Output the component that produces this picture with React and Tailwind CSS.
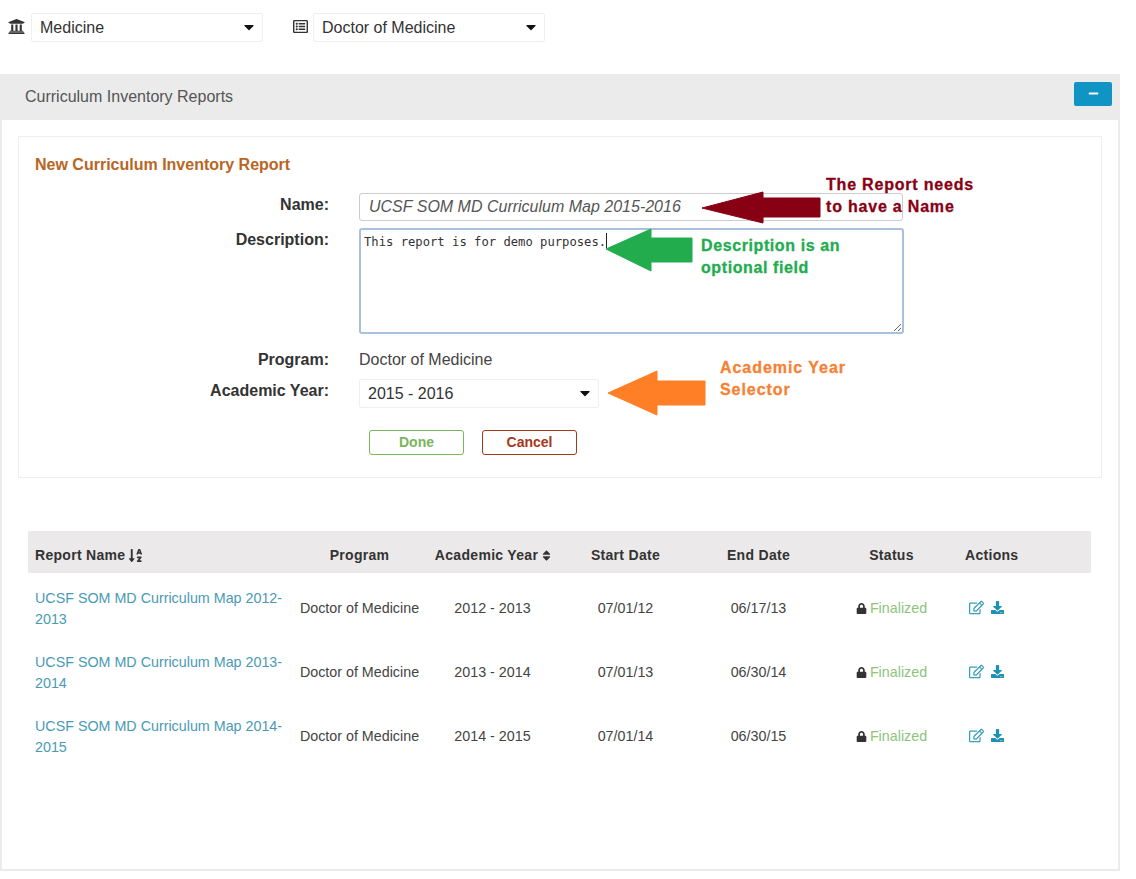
import React from "react";
import { FaUniversity, FaRegListAlt, FaSortAlphaDown, FaSort, FaLock, FaRegEdit, FaDownload, FaMinus, FaCaretDown } from "react-icons/fa";

const font = "font-['Liberation_Sans',Arial,sans-serif]";

function Select({ value, className }) {
  return (
    <div className={`relative h-[29px] border border-[#efefef] rounded-[2px] bg-white ${className}`}>
      <select defaultValue={value} className="w-full h-full appearance-none bg-transparent pl-2 pr-6 text-[16px] text-[#333] outline-none">
        <option>{value}</option>
      </select>
      <FaCaretDown className="absolute right-[5px] top-[5px] w-[16px] h-[16px] text-[#111] pointer-events-none" />
    </div>
  );
}

const rows = [
  ["UCSF SOM MD Curriculum Map 2012-2013", "2012 - 2013", "07/01/12", "06/17/13"],
  ["UCSF SOM MD Curriculum Map 2013-2014", "2013 - 2014", "07/01/13", "06/30/14"],
  ["UCSF SOM MD Curriculum Map 2014-2015", "2014 - 2015", "07/01/14", "06/30/15"],
];

function Note({ className, children }) {
  return <div className={`absolute text-[16px] leading-[22px] font-bold [-webkit-text-stroke:0.3px] whitespace-nowrap ${className}`}>{children}</div>;
}

function Arrow({ className, w, h, points, fill }) {
  return (
    <svg className={`absolute ${className}`} width={w} height={h} viewBox={`0 0 ${w} ${h}`}>
      <polygon points={points} fill={fill} stroke={fill} strokeWidth="1" strokeLinejoin="round" />
    </svg>
  );
}

export default function App() {
  return (
    <div className={`relative w-[1136px] h-[879px] bg-white text-[#444] ${font}`}>
      <div className="h-[74px] pt-[13px] flex items-start">
        <FaUniversity className="ml-[8px] mt-[5px] w-[17px] h-[17px] text-[#333]" />
        <Select value="Medicine" className="ml-[6px] w-[232px]" />
        <FaRegListAlt className="ml-[30px] mt-[6px] w-[15px] h-[15px] text-[#333]" />
        <Select value="Doctor of Medicine" className="ml-[5px] w-[232px]" />
      </div>

      <div className="w-[1120px] h-[797px] border-x-2 border-b-2 border-[#ebebeb]">
        <div className="-mx-[2px] h-[46px] bg-[#ebebeb] pl-[25px] pr-[8px] flex items-center justify-between">
          <span className="text-[16px] text-[#555] -mt-[1px]">Curriculum Inventory Reports</span>
          <button className="w-[38px] h-[24px] -mt-[7px] rounded-[2px] bg-[#0f94c4] flex items-center justify-center">
            <FaMinus className="w-[11px] h-[11px] text-white" />
          </button>
        </div>

        <div className="ml-[16px] mt-[16px] w-[1084px] h-[342px] border border-[#eeeeee] pt-[18px] pl-[16px]">
          <h2 className="text-[16px] leading-[20px] font-bold text-[#b8661f]">New Curriculum Inventory Report</h2>

          <div className="mt-[18px] flex">
            <label className="w-[294px] text-right text-[16px] leading-[22px] font-bold text-[#333] mt-[1px]">Name:</label>
            <input readOnly defaultValue="UCSF SOM MD Curriculum Map 2015-2016" className="ml-[30px] w-[544px] h-[28px] border border-[#cccccc] rounded-[3px] pl-[9px] pb-[1px] text-[16px] italic text-[#555] outline-none" />
          </div>

          <div className="mt-[7px] flex">
            <label className="w-[294px] text-right text-[16px] leading-[22px] font-bold text-[#333] mt-[1px]">Description:</label>
            <div className="relative ml-[30px] w-[545px] h-[106px]">
              <textarea readOnly defaultValue="This report is for demo purposes." className="block w-full h-full border-2 border-[#a9c1d9] rounded-[3px] px-[3px] pt-[5px] font-['DejaVu_Sans_Mono',monospace] text-[12.2px] leading-[15px] text-[#333] outline-none" />
              <span className="absolute left-[247px] top-[5px] w-px h-[15px] bg-[#222]" />
            </div>
          </div>

          <div className="mt-[14px] flex h-[22px] items-center">
            <label className="w-[294px] text-right text-[16px] font-bold text-[#333] mt-[2px]">Program:</label>
            <span className="ml-[30px] text-[16px] text-[#444] mt-[2px]">Doctor of Medicine</span>
          </div>

          <div className="mt-[9px] flex">
            <label className="w-[294px] text-right text-[16px] leading-[22px] font-bold text-[#333] mt-[1px]">Academic Year:</label>
            <Select value="2015 - 2016" className="ml-[30px] w-[240px]" />
          </div>

          <div className="mt-[22px] ml-[334px] flex gap-[18px]">
            <button className="w-[95px] h-[25px] border border-[#78b75a] rounded-[3px] bg-white text-[14px] font-bold text-[#7ab55c]">Done</button>
            <button className="w-[95px] h-[25px] border border-[#a5371b] rounded-[3px] bg-white text-[14px] font-bold text-[#a5371b]">Cancel</button>
          </div>
        </div>

        <table className="ml-[26px] mt-[53px] w-[1063px] table-fixed text-[14.3px] text-[#444] border-collapse">
          <colgroup>
            <col className="w-[265px]" />
            <col className="w-[133px]" />
            <col className="w-[133px]" />
            <col className="w-[133px]" />
            <col className="w-[133px]" />
            <col className="w-[133px]" />
            <col className="w-[133px]" />
          </colgroup>
          <thead>
            <tr className="h-[42px] bg-[#ebe9e9] text-[14px] text-[#333] tracking-[0.3px]">
              <th className="pl-[7px] pt-[6px] text-left font-bold">
                <span className="inline-flex items-center gap-[3px]">Report Name <FaSortAlphaDown className="w-[15px] h-[15px]" /></span>
              </th>
              <th className="pt-[6px] font-bold">Program</th>
              <th className="pt-[6px] font-bold">
                <span className="inline-flex items-center gap-[2px] ml-[3px]">Academic Year <FaSort className="w-[13px] h-[13px]" /></span>
              </th>
              <th className="pt-[6px] font-bold">Start Date</th>
              <th className="pt-[6px] font-bold">End Date</th>
              <th className="pt-[6px] font-bold">Status</th>
              <th className="pl-[7px] pt-[6px] text-left font-bold">Actions</th>
            </tr>
          </thead>
          <tbody>
            {rows.map((r) => (
              <tr key={r[0]} className="h-[64px]">
                <td className="pl-[7px] pr-[7px] pt-[8px] leading-[21px] text-[#4a9ab5]">{r[0]}</td>
                <td className="pt-[8px] text-center">Doctor of Medicine</td>
                <td className="pt-[8px] text-center">{r[1]}</td>
                <td className="pt-[8px] text-center">{r[2]}</td>
                <td className="pt-[8px] text-center">{r[3]}</td>
                <td className="pt-[8px] text-center">
                  <span className="inline-flex items-center gap-[3px]">
                    <FaLock className="w-[11px] h-[11px] text-[#333]" />
                    <span className="text-[#8cc47a]">Finalized</span>
                  </span>
                </td>
                <td className="pl-[11px] pt-[4px]">
                  <span className="flex items-center gap-[7px]">
                    <FaRegEdit className="w-[15px] h-[15px] text-[#3a9cc0]" />
                    <FaDownload className="w-[13px] h-[13px] text-[#1f8fb5]" />
                  </span>
                </td>
              </tr>
            ))}
          </tbody>
        </table>
      </div>

      <Arrow className="left-[700px] top-[190px]" w={122} h={36} fill="#870014" points="2,18 63,2 63,8 120,8 120,27 63,27 63,33" />
      <Arrow className="left-[604px] top-[227px]" w={90} h={46} fill="#22ac4e" points="2,22 47,2 47,11 88,11 88,35 47,35 47,44" />
      <Arrow className="left-[606px] top-[369px]" w={101} h={48} fill="#ff7f27" points="2,24 51,2 51,12 99,12 99,36 51,36 51,46" />

      <Note className="left-[826px] top-[174px] tracking-[0.8px] text-[#870014]">The Report needs<br />to have a Name</Note>
      <Note className="left-[701px] top-[235px] tracking-[0.6px] text-[#22ac4e]">Description is an<br />optional field</Note>
      <Note className="left-[720px] top-[357px] tracking-[0.95px] text-[#f58233]">Academic Year<br />Selector</Note>
    </div>
  );
}
